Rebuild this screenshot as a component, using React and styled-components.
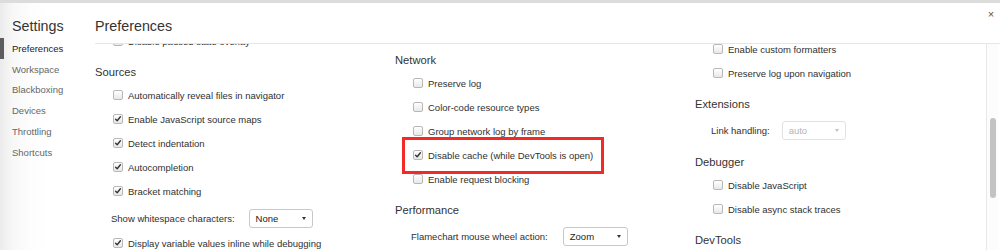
import React from 'react';
import styled, { createGlobalStyle, css } from 'styled-components';

const Global = createGlobalStyle`
  html, body { margin: 0; padding: 0; background: #fff; }
  body {
    width: 1000px; height: 250px; overflow: hidden;
    font-family: "Liberation Sans", Arial, Helvetica, sans-serif;
    color: #303030;
  }
  *, *::before, *::after { box-sizing: border-box; }
`;

const Window = styled.div`
  width: 1000px; height: 250px;
  display: flex; flex-direction: column;
  overflow: hidden; background: #fff;
`;

const TopStrip = styled.div`
  flex: none; height: 3px; background: #dcdcdc;
`;

const Body = styled.div`
  flex: 1; min-height: 0;
  display: grid; grid-template-columns: 95px 1fr;
`;

const Sidebar = styled.nav`
  display: flex; flex-direction: column;
  background: linear-gradient(to right, #ebebeb 0, #f7f7f7 12px, #fdfdfd 30px, #fff 50px);
`;

const SidebarTitle = styled.div`
  height: 35px; padding: 11px 0 0 12px;
  display: flex; align-items: center;
  font-size: 14.3px; color: #333;
`;

const SideItem = styled.div`
  height: 20.8px; padding-left: 12px;
  display: flex; align-items: center;
  font-size: 9.5px;
  color: ${p => (p.$active ? '#222' : '#666')};
  ${p => p.$active && css`box-shadow: inset 4px 0 0 #5d5d5d;`}
`;

const Main = styled.main`
  min-width: 0; display: flex; flex-direction: column;
`;

const Header = styled.header`
  flex: none; height: 41px; padding-top: 6px;
  display: flex; align-items: center;
  border-bottom: 1px solid #e6e6e6;
`;

const Title = styled.h1`
  flex: 1; margin: 0; font-weight: normal;
  font-size: 14.3px; color: #333;
`;

const Close = styled.button`
  align-self: flex-start;
  width: 10px; height: 10px; margin-right: 4px; padding: 0;
  border: none; background: none;
  font-family: inherit; font-size: 11px; line-height: 10px;
  color: #555; cursor: pointer;
`;

const ContentArea = styled.div`
  flex: 1; min-height: 0; display: flex;
`;

const Columns = styled.div`
  flex: 1; min-width: 0; overflow: hidden;
  display: grid; grid-template-columns: repeat(3, 300px);
  align-items: start;
`;

const Column = styled.section`
  display: flex; flex-direction: column;
  margin-top: ${p => p.$offset}px;
`;

const SectionTitle = styled.h2`
  margin: 8px 0 0; height: 22px; line-height: 22px;
  font-size: 11.2px; font-weight: normal; color: #333;
`;

const CheckRow = styled.label`
  position: relative;
  height: 24px; padding-left: 18px;
  display: flex; align-items: center; gap: 5px;
  font-size: 9.5px; color: #303030;
  white-space: nowrap;
  ${p => p.$highlight && css`
    &::after {
      content: '';
      position: absolute; left: 7px; top: -6px;
      width: 202px; height: 37px;
      border: 3px solid #f42a27;
      pointer-events: none;
    }
  `}
`;

const Box = styled.span`
  flex: none; width: 10px; height: 10px;
  border: 1px solid #b8b8b8; border-radius: 2px;
  background: linear-gradient(#ffffff, #e8e8e8);
  display: flex; align-items: center; justify-content: center;
`;

const SelectRow = styled.div`
  margin-top: 2px; height: 26px; padding-left: 16px;
  display: flex; align-items: center; gap: ${p => p.$gap || 13}px;
  font-size: 9.5px; color: #303030; white-space: nowrap;
`;

const Select = styled.div`
  width: ${p => p.$w || 64}px; height: 19px; padding: 0 6px;
  display: flex; align-items: center; justify-content: space-between;
  border: 1px solid ${p => (p.$disabled ? '#e2e2e2' : '#c8c8c8')};
  border-radius: 3px; background: #fff;
  font-size: 9.5px; color: ${p => (p.$disabled ? '#b4b4b4' : '#222')};
`;

const Arrow = styled.span`
  width: 0; height: 0;
  border-left: 2.5px solid transparent;
  border-right: 2.5px solid transparent;
  border-top: 3px solid ${p => (p.$disabled ? '#c0c0c0' : '#333')};
`;

const Scrollbar = styled.div`
  flex: none; width: 12px; margin-right: 2px;
  border-left: 1px solid #e8e8e8; background: #fcfcfc;
  padding: 74px 0 0 2.5px;
`;

const Thumb = styled.div`
  width: 6px; height: 80px; border-radius: 3px; background: #c3c3c3;
`;

function Check({ label, checked, highlight }) {
  return (
    <CheckRow $highlight={highlight}>
      <Box>
        {checked && (
          <svg width="8" height="8" viewBox="0 0 8 8">
            <path d="M1.6 4.2 L3.2 5.8 L6.4 1.8" fill="none" stroke="#333" strokeWidth="1.4" strokeLinecap="round" strokeLinejoin="round" />
          </svg>
        )}
      </Box>
      <span>{label}</span>
    </CheckRow>
  );
}

function Dropdown({ label, value, disabled, width, gap }) {
  return (
    <SelectRow $gap={gap}>
      <span>{label}</span>
      <Select $disabled={disabled} $w={width}>
        <span>{value}</span>
        <Arrow $disabled={disabled} />
      </Select>
    </SelectRow>
  );
}

const navItems = ['Preferences', 'Workspace', 'Blackboxing', 'Devices', 'Throttling', 'Shortcuts'];

export default function App() {
  return (
    <>
      <Global />
      <Window>
        <TopStrip />
        <Body>
          <Sidebar>
            <SidebarTitle>Settings</SidebarTitle>
            {navItems.map((n, i) => (
              <SideItem key={n} $active={i === 0}>{n}</SideItem>
            ))}
          </Sidebar>
          <Main>
            <Header>
              <Title>Preferences</Title>
              <Close aria-label="Close">×</Close>
            </Header>
            <ContentArea>
              <Columns>
                <Column $offset={-15}>
                  <Check label="Disable paused state overlay" />
                  <SectionTitle>Sources</SectionTitle>
                  <Check label="Automatically reveal files in navigator" />
                  <Check label="Enable JavaScript source maps" checked />
                  <Check label="Detect indentation" checked />
                  <Check label="Autocompletion" checked />
                  <Check label="Bracket matching" checked />
                  <Dropdown label="Show whitespace characters:" value="None" gap={14} />
                  <Check label="Display variable values inline while debugging" checked />
                </Column>
                <Column $offset={-3}>
                  <SectionTitle>Network</SectionTitle>
                  <Check label="Preserve log" />
                  <Check label="Color-code resource types" />
                  <Check label="Group network log by frame" />
                  <Check label="Disable cache (while DevTools is open)" checked highlight />
                  <Check label="Enable request blocking" />
                  <SectionTitle>Performance</SectionTitle>
                  <Dropdown label="Flamechart mouse wheel action:" value="Zoom" width={65} gap={15} />
                </Column>
                <Column $offset={-7}>
                  <Check label="Enable custom formatters" />
                  <Check label="Preserve log upon navigation" />
                  <SectionTitle>Extensions</SectionTitle>
                  <Dropdown label="Link handling:" value="auto" disabled gap={12} />
                  <SectionTitle>Debugger</SectionTitle>
                  <Check label="Disable JavaScript" />
                  <Check label="Disable async stack traces" />
                  <SectionTitle>DevTools</SectionTitle>
                </Column>
              </Columns>
              <Scrollbar>
                <Thumb />
              </Scrollbar>
            </ContentArea>
          </Main>
        </Body>
      </Window>
    </>
  );
}
